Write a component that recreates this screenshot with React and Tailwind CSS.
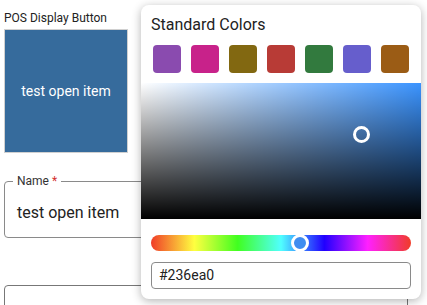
const swatches = ["#8a4baf", "#c8228a", "#826811", "#b83b36", "#327a3e", "#665ecc", "#9b5c15"];

function ColorPopover() {
  return (
    <div className="absolute left-[141px] top-[5px] w-[280px] rounded-lg bg-white pt-[10px] pb-[10px] shadow-[0_2px_10px_rgba(0,0,0,0.3)]">
      <div className="px-[10px] text-[16px] leading-[20px] text-[#222]">Standard Colors</div>
      <div className="mt-[10px] flex gap-[10px] pl-[12px]">
        {swatches.map((c) => (
          <div key={c} className="h-[28px] w-[28px] rounded-[4px]" style={{ backgroundColor: c }} />
        ))}
      </div>

      {/* saturation / value area */}
      <div className="relative mt-[10px] h-[136px] w-full bg-[#3b94ff]">
        <div className="absolute inset-0 bg-linear-to-r from-white to-transparent" />
        <div className="absolute inset-0 bg-linear-to-t from-black to-transparent" />
        <div className="absolute left-[212px] top-[43px] h-[17px] w-[17px] rounded-full border-[3px] border-white" />
      </div>

      {/* hue slider */}
      <div className="relative mx-[10px] mt-[16px] h-[16px] rounded-full bg-[linear-gradient(to_right,#f03c28,#ffff40,#40ff20,#50ffff,#2000ff,#ff20ff,#f03c28)]">
        <div className="absolute left-[140px] top-[-1px] h-[18px] w-[18px] rounded-full border-[3px] border-white bg-[#3f8df0]" />
      </div>

      <div className="mx-[10px] mt-[11px] flex h-[27px] items-center rounded-[4px] border border-[#8a8a8a] pl-[7px] text-[14px] text-[#222]">
        #236ea0
      </div>
    </div>
  );
}

export default function App() {
  return (
    <div className="relative h-[305px] w-[427px] overflow-hidden bg-white font-['Roboto',sans-serif]">
      <div className="pl-[4px] pt-[10px]">
        <div className="text-[12px] leading-[16px] text-[#222]">POS Display Button</div>
        <div className="mt-[3px] flex h-[124px] w-[124px] items-center justify-center border border-[#d0d0d0] bg-[#366b9c] text-[14px] text-white">
          test open item
        </div>

        <div className="relative mt-[28px] flex h-[57px] w-[404px] items-center rounded-[4px] border border-[#8a8a8a] pl-[12px] pt-[7px] text-[16px] text-[#222]">
          <span className="absolute left-[8px] top-[-9px] bg-white px-[4px] text-[12px] leading-[16px] text-[#333]">
            Name <span className="text-[#d32f2f]">*</span>
          </span>
          test open item
        </div>

        <div className="mt-[47px] h-[40px] w-[404px] rounded-[4px] border border-[#777]" />
      </div>

      <ColorPopover />
    </div>
  );
}
